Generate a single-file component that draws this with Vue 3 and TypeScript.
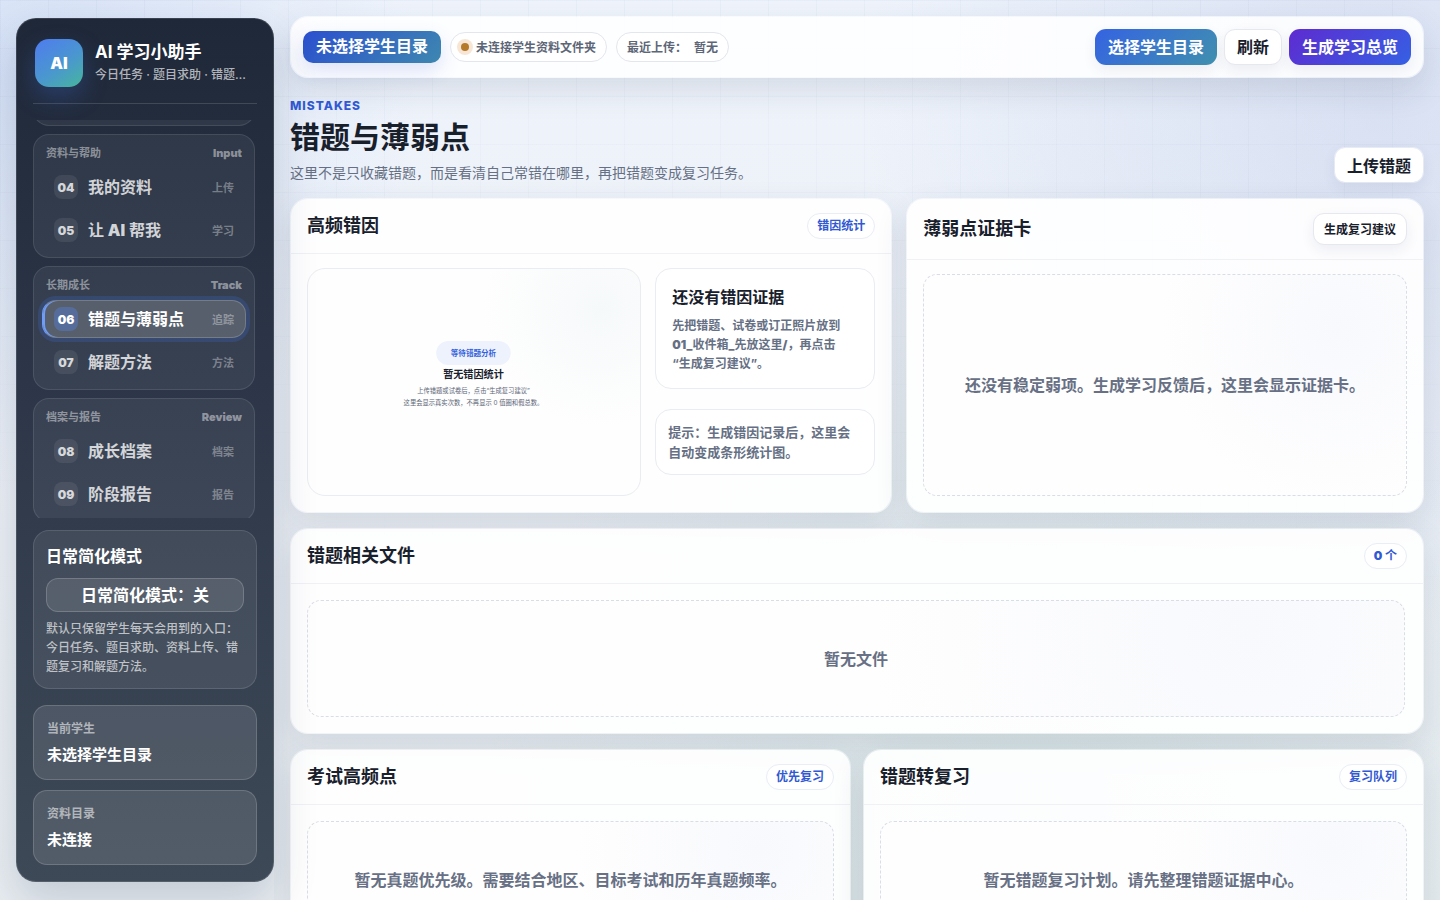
<script setup lang="ts">
import { ref } from 'vue'

interface NavItem {
  no: string
  label: string
  tag: string
}
interface NavGroup {
  title: string
  hint: string
  items: NavItem[]
}

const groups: NavGroup[] = [
  {
    title: '资料与帮助',
    hint: 'Input',
    items: [
      { no: '04', label: '我的资料', tag: '上传' },
      { no: '05', label: '让 AI 帮我', tag: '学习' },
    ],
  },
  {
    title: '长期成长',
    hint: 'Track',
    items: [
      { no: '06', label: '错题与薄弱点', tag: '追踪' },
      { no: '07', label: '解题方法', tag: '方法' },
    ],
  },
  {
    title: '档案与报告',
    hint: 'Review',
    items: [
      { no: '08', label: '成长档案', tag: '档案' },
      { no: '09', label: '阶段报告', tag: '报告' },
    ],
  },
]

const active = ref('06')
const simple = ref(false)

// Latin runs are set in a heavier weight than the Chinese text around them.
const runs = (text: string) =>
  text
    .split(/([A-Za-z]+)/)
    .filter(Boolean)
    .map((t) => ({ t, latin: /^[A-Za-z]+$/.test(t) }))
</script>

<template>
  <div class="shell">
    <aside class="sidebar">
      <div class="brand">
        <div class="logo">AI</div>
        <div class="brand-text">
          <strong>AI 学习小助手</strong>
          <span>今日任务 · 题目求助 · 错题…</span>
        </div>
      </div>

      <nav class="nav">
        <div class="group group-above"></div>
        <section v-for="g in groups" :key="g.title" class="group">
          <header class="group-head">
            <span>{{ g.title }}</span>
            <span class="heavy">{{ g.hint }}</span>
          </header>
          <button
            v-for="i in g.items"
            :key="i.no"
            type="button"
            class="item"
            :class="{ active: active === i.no }"
            @click="active = i.no"
          >
            <span class="no">{{ i.no }}</span>
            <span class="label"
              ><span v-for="(r, k) in runs(i.label)" :key="k" :class="{ heavy: r.latin }">{{ r.t }}</span></span
            >
            <span class="tag">{{ i.tag }}</span>
          </button>
        </section>
      </nav>

      <section class="mode">
        <h2>日常简化模式</h2>
        <button type="button" @click="simple = !simple">日常简化模式：{{ simple ? '开' : '关' }}</button>
        <p>默认只保留学生每天会用到的入口：今日任务、题目求助、资料上传、错题复习和解题方法。</p>
      </section>

      <div class="infos">
        <div class="info">
          <span>当前学生</span>
          <strong>未选择学生目录</strong>
        </div>
        <div class="info">
          <span>资料目录</span>
          <strong>未连接</strong>
        </div>
      </div>
    </aside>

    <main class="main">
      <div class="topbar">
        <div class="status">
          <span class="student">未选择学生目录</span>
          <span class="chip"><i class="dot"></i>未连接学生资料文件夹</span>
          <span class="chip"><span>最近上传：</span><span>暂无</span></span>
        </div>
        <div class="actions">
          <button type="button" class="btn primary">选择学生目录</button>
          <button type="button" class="btn">刷新</button>
          <button type="button" class="btn violet">生成学习总览</button>
        </div>
      </div>

      <header class="page-head">
        <div>
          <div class="eyebrow">MISTAKES</div>
          <h1>错题与薄弱点</h1>
          <p>这里不是只收藏错题，而是看清自己常错在哪里，再把错题变成复习任务。</p>
        </div>
        <button type="button" class="btn upload">上传错题</button>
      </header>

      <div class="row row-top">
        <section class="card">
          <header class="card-head">
            <h3>高频错因</h3>
            <span class="pill">错因统计</span>
          </header>
          <div class="card-body stats">
            <div class="chart">
              <svg viewBox="0 0 526 358" role="img" aria-label="暂无错因统计">
                <rect x="203" y="114" width="118" height="38" rx="19" fill="#eef2fd" />
                <text x="262" y="138" class="c-pill">等待错题分析</text>
                <text x="262" y="172" class="c-title">暂无错因统计</text>
                <text x="262" y="196" class="c-note">上传错题或试卷后，点击“生成复习建议”</text>
                <text x="262" y="215" class="c-note">这里会显示真实次数，不再显示 0 值圈和假总数。</text>
              </svg>
            </div>
            <div class="side">
              <div class="evidence">
                <h4>还没有错因证据</h4>
                <p>
                  先把错题、试卷或订正照片放到
                  <span class="heavy">01_</span>收件箱<span class="heavy">_</span>先放这里<span class="heavy">/</span>，再点击<br />“生成复习建议”。
                </p>
              </div>
              <div class="tip">提示：生成错因记录后，这里会自动变成条形统计图。</div>
            </div>
          </div>
        </section>

        <section class="card">
          <header class="card-head">
            <h3>薄弱点证据卡</h3>
            <button type="button" class="btn small">生成复习建议</button>
          </header>
          <div class="card-body">
            <div class="empty">还没有稳定弱项。生成学习反馈后，这里会显示证据卡。</div>
          </div>
        </section>
      </div>

      <section class="card">
        <header class="card-head">
          <h3>错题相关文件</h3>
          <span class="pill"><span class="heavy">0</span> 个</span>
        </header>
        <div class="card-body roomy files">
          <div class="empty">暂无文件</div>
        </div>
      </section>

      <div class="row row-half">
        <section class="card">
          <header class="card-head">
            <h3>考试高频点</h3>
            <span class="pill">优先复习</span>
          </header>
          <div class="card-body roomy">
            <div class="empty">暂无真题优先级。需要结合地区、目标考试和历年真题频率。</div>
          </div>
        </section>
        <section class="card">
          <header class="card-head">
            <h3>错题转复习</h3>
            <span class="pill">复习队列</span>
          </header>
          <div class="card-body roomy">
            <div class="empty">暂无错题复习计划。请先整理错题证据中心。</div>
          </div>
        </section>
      </div>
    </main>
  </div>
</template>

<style>
body {
  margin: 0;
  overflow: hidden;
}
</style>

<style scoped>
* {
  box-sizing: border-box;
}
h1,
h2,
h3,
h4,
p {
  margin: 0;
}
button {
  font-family: inherit;
  cursor: pointer;
}
.shell {
  position: relative;
  display: flex;
  height: 100vh;
  font-family: Inter, 'Noto Sans CJK SC', sans-serif;
  color: #18202c;
  background:
    radial-gradient(circle at 0% 8%, rgba(110, 150, 225, 0.2), transparent 420px),
    radial-gradient(circle at 96% 12%, rgba(110, 135, 205, 0.17), transparent 520px),
    radial-gradient(circle at 72% 90%, rgba(80, 160, 135, 0.1), transparent 560px),
    linear-gradient(180deg, #eff4fc 0%, #ebeff5 60%, #e8edf1 100%);
}
.shell::before {
  content: '';
  position: absolute;
  inset: 0;
  pointer-events: none;
  background-image:
    linear-gradient(rgba(50, 80, 150, 0.03) 1px, transparent 1px),
    linear-gradient(90deg, rgba(50, 80, 150, 0.03) 1px, transparent 1px);
  background-size: 48px 48px;
  mask-image: linear-gradient(#000, transparent 70%);
}
.heavy {
  font-weight: 900;
}

/* sidebar */
.sidebar {
  position: relative;
  z-index: 1;
  flex: none;
  display: flex;
  flex-direction: column;
  width: 258px;
  margin: 18px 0 18px 16px;
  padding: 16px;
  border: 1px solid rgba(255, 255, 255, 0.12);
  border-radius: 20px;
  background: linear-gradient(180deg, #1f2838 0%, #2c3648 42%, #3e4957 100%);
  background-clip: border-box;
  background-origin: border-box;
  box-shadow: 0 18px 44px rgba(30, 45, 80, 0.18);
  color: #fff;
}
.brand {
  display: flex;
  align-items: center;
  gap: 12px;
  padding: 4px 2px 16px;
  border-bottom: 1px solid rgba(255, 255, 255, 0.14);
}
.logo {
  flex: none;
  display: grid;
  place-items: center;
  width: 48px;
  height: 48px;
  border-radius: 14px;
  background: linear-gradient(145deg, #4f7bf0 0%, #4a97cf 55%, #46b69b 100%);
  box-shadow: 0 10px 24px rgba(60, 110, 230, 0.28);
  font-size: 16px;
  font-weight: 900;
}
.brand-text {
  min-width: 0;
}
.brand-text strong,
.brand-text span {
  display: block;
  white-space: nowrap;
}
.brand-text strong {
  padding-bottom: 2px;
  font-size: 17px;
  line-height: 22px;
  font-weight: 700;
}
.brand-text span {
  font-size: 12px;
  line-height: 20px;
  font-weight: 500;
  color: rgba(255, 255, 255, 0.66);
}
.nav {
  flex: 1;
  min-height: 0;
  display: flex;
  flex-direction: column;
  gap: 8px;
  margin-top: 16px;
  padding-right: 2px;
  overflow: hidden;
}
.group {
  flex: none;
  display: flex;
  flex-direction: column;
  gap: 5px;
  padding: 8px;
  border: 1px solid rgba(255, 255, 255, 0.1);
  border-radius: 16px;
  background: rgba(255, 255, 255, 0.06);
}
.group-above {
  height: 40px;
  margin-top: -34px;
}
.group-head {
  display: flex;
  justify-content: space-between;
  padding: 0 4px;
  font-size: 11px;
  line-height: 20px;
  font-weight: 700;
  color: rgba(255, 255, 255, 0.46);
}
.item {
  display: flex;
  align-items: center;
  gap: 10px;
  height: 38px;
  padding: 0 11px;
  border: 1px solid transparent;
  border-radius: 14px;
  background: transparent;
  color: rgba(255, 255, 255, 0.78);
  text-align: left;
}
.no {
  display: grid;
  place-items: center;
  width: 24px;
  height: 24px;
  border-radius: 8px;
  background: rgba(255, 255, 255, 0.08);
  font-size: 12px;
  font-weight: 900;
}
.label {
  flex: 1;
  padding-bottom: 2px;
  font-size: 16px;
  font-weight: 700;
  white-space: pre-wrap;
}
.tag {
  font-size: 11px;
  font-weight: 700;
  color: rgba(255, 255, 255, 0.36);
}
.item.active {
  border-color: rgba(255, 255, 255, 0.18);
  border-left-color: #6f9cf5;
  background: rgba(255, 255, 255, 0.17);
  box-shadow:
    inset 2px 0 0 #6f9cf5,
    0 0 0 4px rgba(60, 110, 220, 0.23);
  color: #fff;
}
.item.active .no {
  background: rgba(85, 135, 240, 0.36);
}
.mode {
  margin-top: 12px;
  padding: 12px;
  border: 1px solid rgba(255, 255, 255, 0.12);
  border-radius: 16px;
  background: rgba(255, 255, 255, 0.08);
}
.mode h2 {
  font-size: 16px;
  line-height: 26px;
  font-weight: 700;
}
.mode button {
  display: block;
  width: 100%;
  height: 34px;
  margin: 9px 0 7px;
  padding: 0 0 2px;
  border: 1px solid rgba(255, 255, 255, 0.18);
  border-radius: 12px;
  background: rgba(255, 255, 255, 0.1);
  color: #fff;
  font-size: 16px;
  font-weight: 700;
}
.mode p {
  font-size: 12px;
  line-height: 19px;
  font-weight: 500;
  color: rgba(255, 255, 255, 0.66);
}
.infos {
  display: grid;
  gap: 10px;
  margin-top: 16px;
}
.info {
  display: grid;
  gap: 5px;
  padding: 13px;
  border: 1px solid rgba(255, 255, 255, 0.16);
  border-radius: 14px;
  background: rgba(255, 255, 255, 0.11);
}
.info span {
  font-size: 12px;
  line-height: 20px;
  font-weight: 700;
  color: rgba(255, 255, 255, 0.56);
}
.info strong {
  font-size: 15px;
  line-height: 22px;
  font-weight: 700;
}

/* main column */
.main {
  position: relative;
  flex: 1;
  min-width: 0;
  display: flex;
  flex-direction: column;
  gap: 15px;
  padding: 16px;
  overflow-y: auto;
  scrollbar-width: none;
}
.main > * {
  flex: none;
}
.topbar {
  display: flex;
  align-items: center;
  justify-content: space-between;
  padding: 12px;
  border: 1px solid rgba(255, 255, 255, 0.5);
  border-radius: 18px;
  background: rgba(255, 255, 255, 0.88);
  background-clip: padding-box;
  box-shadow: 0 12px 32px rgba(40, 55, 80, 0.13);
}
.status {
  display: flex;
  align-items: center;
  gap: 9px;
}
.student {
  padding: 0 13px 2px;
  border-radius: 10px;
  background: linear-gradient(135deg, #2b50cf, #3e87b0);
  box-shadow: 0 8px 20px rgba(50, 80, 210, 0.16);
  color: #fff;
  font-size: 16px;
  line-height: 30px;
  font-weight: 700;
}
.chip {
  display: flex;
  align-items: center;
  gap: 7px;
  height: 30px;
  padding: 0 10px 1px;
  border: 1px solid #e3e6ed;
  border-radius: 15px;
  background: rgba(255, 255, 255, 0.8);
  color: #5d6677;
  font-size: 12px;
  font-weight: 700;
}
.dot {
  width: 8px;
  height: 8px;
  border-radius: 50%;
  background: #b57a2a;
  box-shadow: 0 0 0 4px #f7e6d6;
}
.actions {
  display: flex;
  gap: 7px;
}
.btn {
  height: 36px;
  padding: 0 12px 2px;
  border: 1px solid #e5e8ef;
  border-radius: 11px;
  background: #fff;
  box-shadow: 0 5px 14px rgba(30, 45, 80, 0.07);
  color: #18202c;
  font-size: 16px;
  font-weight: 700;
  white-space: nowrap;
}
.btn.primary,
.btn.violet {
  padding: 0 13px 2px;
  border: 0;
  color: #fff;
}
.btn.primary {
  background: linear-gradient(135deg, #3563e2, #4090ae);
}
.btn.violet {
  background: linear-gradient(135deg, #5e2bd0, #3560e4);
}
.btn.upload {
  padding-bottom: 0;
  border-color: rgba(255, 255, 255, 0.4);
  background-clip: padding-box;
}
.btn.small {
  height: 32px;
  padding: 0 10px 2px;
  font-size: 12px;
}
.page-head {
  display: flex;
  align-items: flex-end;
  justify-content: space-between;
  padding-top: 4px;
}
.eyebrow {
  font-size: 12px;
  line-height: 18px;
  font-weight: 800;
  letter-spacing: 1px;
  color: #3159d3;
}
.page-head h1 {
  margin: 3px 0 6px;
  font-size: 30px;
  line-height: 38px;
  font-weight: 700;
}
.page-head p {
  font-size: 14px;
  line-height: 21px;
  color: #667084;
}
.row {
  display: grid;
}
.row-top {
  grid-template-columns: 1.163fr 1fr;
  gap: 14px;
}
.row-half {
  grid-template-columns: 1fr 1fr;
  gap: 12px;
}
.card {
  display: flex;
  flex-direction: column;
  min-width: 0;
  border: 1px solid rgba(255, 255, 255, 0.4);
  border-radius: 18px;
  background: rgba(255, 255, 255, 0.92);
  background-clip: padding-box;
  box-shadow: 0 12px 32px rgba(40, 55, 80, 0.12);
}
.card-head {
  display: flex;
  align-items: center;
  justify-content: space-between;
  padding: 14px 16px;
  border-bottom: 1px solid #eff1f5;
}
.card-head h3 {
  font-size: 18px;
  line-height: 26px;
  font-weight: 700;
}
.pill {
  padding: 0 9px;
  border: 1px solid #e9edf5;
  border-radius: 13px;
  background: #fff;
  color: #3159d3;
  font-size: 12px;
  line-height: 24px;
  font-weight: 700;
}
.card-body {
  flex: 1;
  display: grid;
  padding: 14px 16px 16px;
}
.card-body.roomy {
  padding-top: 16px;
}
.card-body.files {
  padding-right: 18px;
}
.stats {
  grid-template-columns: 1fr 220px;
  gap: 14px;
}
.chart {
  display: grid;
  min-width: 0;
  border: 1px solid #e9ecf1;
  border-radius: 18px;
  background: radial-gradient(circle at 88% 18%, #f6f9fa, #fefefe 34%);
}
.chart svg {
  display: block;
  width: 100%;
  text-anchor: middle;
}
.c-pill {
  font-size: 12px;
  font-weight: 700;
  fill: #3461dc;
}
.c-title {
  font-size: 16px;
  font-weight: 700;
  fill: #18202c;
}
.c-note {
  font-size: 10px;
  fill: #5d6677;
}
.side {
  display: flex;
  flex-direction: column;
  gap: 20px;
}
.evidence,
.tip {
  border: 1px solid #e9ecf1;
  border-radius: 16px;
  background: rgba(255, 255, 255, 0.8);
  color: #667084;
  font-weight: 700;
}
.evidence {
  padding: 16px 16px 15px;
}
.evidence h4 {
  margin-bottom: 7px;
  color: #18202c;
  font-size: 16px;
  line-height: 24px;
  font-weight: 700;
}
.evidence p {
  font-size: 12px;
  line-height: 19px;
}
.tip {
  padding: 12px;
  font-size: 13px;
  line-height: 20px;
}
.empty {
  display: grid;
  place-items: center;
  min-height: 117px;
  padding: 16px;
  border: 1px dashed #d9dde5;
  border-radius: 14px;
  background: radial-gradient(circle at 86% 24%, #f8f9fd, #fefefe 40%);
  color: #677084;
  font-size: 16px;
  line-height: 24px;
  font-weight: 700;
  text-align: center;
}
</style>
